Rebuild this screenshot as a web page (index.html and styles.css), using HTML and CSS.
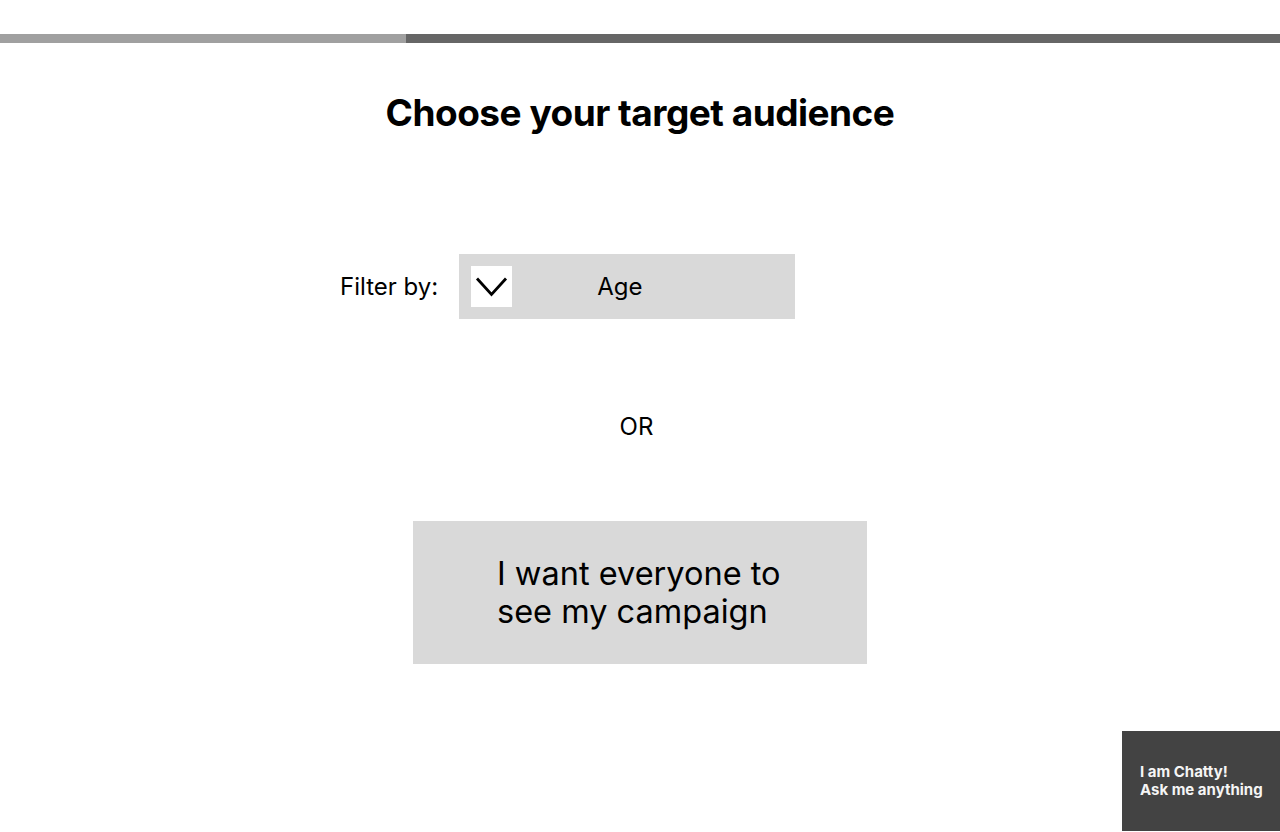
FILE: index.html
```html
<!DOCTYPE html>
<html lang="en">

<head>
  <meta charset="UTF-8">
  <meta name="viewport" content="width=device-width, initial-scale=1.0">
  <title>Target audience</title>
  <link rel="stylesheet" href="styles.css">
</head>

<body>
  <div class="progress">
    <div class="progress-done"></div>
  </div>

  <h1>Choose your target audience</h1>

  <div class="filter-row">
    <label class="filter-label">Filter by:</label>
    <div class="select">
      <span class="select-toggle">
        <svg width="41" height="41" viewBox="0 0 41 41">
          <path d="M6 12.5 L20.5 28.5 L35 12.5" fill="none" stroke="#000" stroke-width="2.8" />
        </svg>
      </span>
      <span class="select-value">Age</span>
    </div>
  </div>

  <p class="or">OR</p>

  <div class="everyone-wrap">
    <button class="everyone">I want everyone to see my campaign</button>
  </div>

  <div class="chatty">
    <p>I am Chatty!<br>Ask me anything</p>
  </div>
</body>

</html>
```

FILE: styles.css
```css
body {
  font-family: Inter, "Noto Sans", sans-serif;
  margin: 0;
  padding: 0;
  background-color: #fff;
  color: #000;
}

.progress {
  margin-top: 34px;
  height: 9px;
  background-color: #666;
}

.progress-done {
  width: 406px;
  height: 100%;
  background-color: #a0a0a0;
}

h1 {
  text-align: center;
  font-size: 37px;
  font-weight: 700;
  letter-spacing: -0.5px;
  line-height: 48px;
  margin: 46px 0 0;
}

.filter-row {
  display: flex;
  align-items: center;
  gap: 21px;
  margin: 117px 0 0 340px;
}

.filter-label {
  font-size: 24px;
}

.select {
  display: flex;
  align-items: center;
  width: 336px;
  height: 65px;
  padding-left: 12px;
  box-sizing: border-box;
  background-color: #d9d9d9;
}

.select-toggle {
  display: block;
  width: 41px;
  height: 41px;
  background-color: #fff;
}

.select-toggle svg {
  display: block;
}

.select-value {
  margin-left: 85px;
  font-size: 24px;
}

.or {
  text-align: center;
  padding-right: 7px;
  font-size: 24px;
  line-height: 28px;
  margin: 94px 0 0;
}

.everyone-wrap {
  display: flex;
  justify-content: center;
  margin-top: 80px;
}

.everyone {
  width: 454px;
  height: 143px;
  padding: 0 84px;
  border: none;
  background-color: #d9d9d9;
  font-family: inherit;
  font-size: 32.5px;
  line-height: 38px;
  text-align: left;
  color: #000;
  cursor: pointer;
}

.chatty {
  position: fixed;
  right: 0;
  bottom: 1px;
  width: 158px;
  height: 100px;
  display: flex;
  align-items: center;
  padding-left: 18px;
  box-sizing: border-box;
  background-color: #434343;
}

.chatty p {
  margin: 0;
  color: #f5f5f5;
  font-size: 15px;
  font-weight: 700;
  line-height: 18px;
}
```
